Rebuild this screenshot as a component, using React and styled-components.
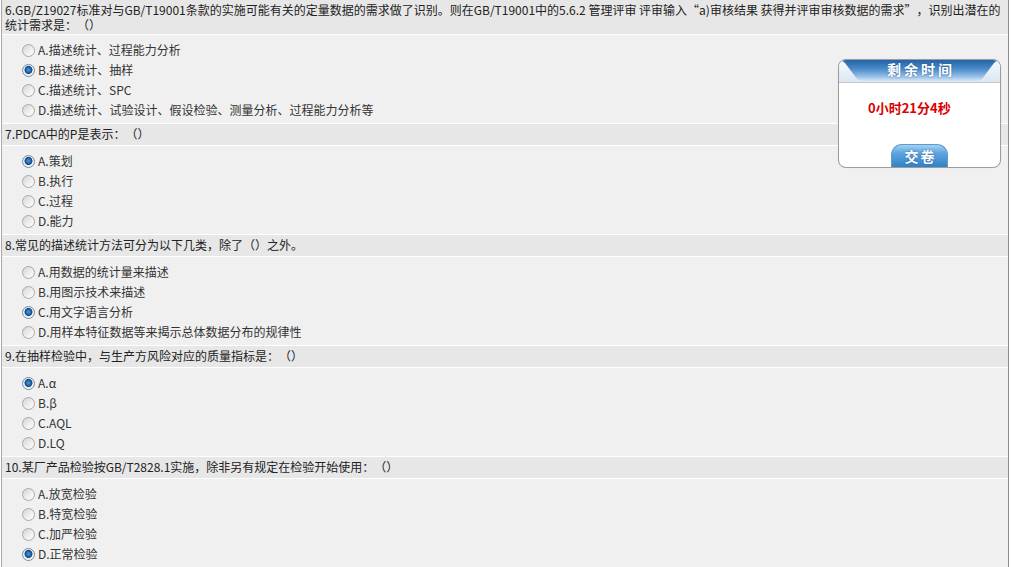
import React from 'react';
import styled, { createGlobalStyle } from 'styled-components';

const GlobalStyle = createGlobalStyle`
  html, body {
    margin: 0;
    padding: 0;
    background: #fff;
  }
  body {
    font-family: "Noto Sans CJK SC", "Noto Sans", sans-serif;
    font-size: 12px;
    text-spacing-trim: space-all;
  }
`;

const Page = styled.div`
  position: relative;
  margin-left: 1px;
  width: 1006px;
  height: 567px;
  overflow: hidden;
  border-left: 1px solid #a9a9a9;
  border-right: 1px solid #8e8e8e;
  background: #f0f0f0;
`;

const QuestionTitle = styled.div`
  padding: 2px 4px ${(p) => (p.$tall ? '2px' : '4px')} 3px;
  line-height: 15px;
  background: #e7e7e7;
  color: #222;
  border-top: ${(p) => (p.$first ? 'none' : '1px solid #fff')};
  border-bottom: 1px solid #fff;
  white-space: nowrap;
`;

const OptionList = styled.div`
  padding: 5px 0 3px 20px;
`;

const OptionRow = styled.label`
  display: flex;
  align-items: center;
  gap: 3px;
  height: 20px;
  color: #333;
  line-height: 20px;
`;

const Radio = styled.input.attrs({ type: 'radio' })`
  appearance: none;
  margin: 0;
  width: 13px;
  height: 13px;
  border-radius: 50%;
  border: 1px solid ${(p) => (p.checked ? '#6f8ba5' : '#a8a8a8')};
  background: ${(p) =>
    p.checked
      ? 'radial-gradient(circle at 50% 45%, #4f9be6 0, #1f62ab 2.6px, #17406e 3.6px, #dfe6ee 4.3px, #ffffff 6px)'
      : 'linear-gradient(135deg, #d4d4d4 0%, #ececec 50%, #ffffff 100%)'};
  box-sizing: border-box;
  flex: none;
`;

const TimerBox = styled.div`
  position: absolute;
  top: 59px;
  left: 836px;
  width: 161px;
  height: 107px;
  border: 1px solid #9c9c9c;
  border-radius: 8px;
  background: #fff;
  overflow: hidden;
  display: flex;
  flex-direction: column;
  align-items: center;
  box-shadow: 0 0 1px rgba(0, 0, 0, 0.15);
`;

const TimerHead = styled.div`
  align-self: stretch;
  height: 22px;
  border-bottom: 1px solid #c6c6c6;
  background: linear-gradient(#f7fafd, #dbe7f2);
`;

const Band = styled.div`
  height: 100%;
  box-sizing: border-box;
  display: flex;
  align-items: center;
  justify-content: center;
  padding: 0 0 4px 3px;
  color: #fff;
  font-size: 14px;
  font-weight: bold;
  letter-spacing: 3px;
  text-shadow: 0 0 2px rgba(20, 60, 110, 0.6);
  background: linear-gradient(180deg, #2463a6 0%, #4a8acb 40%, #8fbbe4 72%, #e3eef9 100%);
  clip-path: polygon(
    2px 0, 6px 3px, 9px 7px, 12px 11px, 15px 15px, 18px 19px, 23px 22px,
    138px 22px, 143px 19px, 146px 15px, 149px 11px, 152px 7px, 155px 3px, 159px 0
  );
`;

const TimeLeft = styled.div`
  align-self: stretch;
  margin-top: 17px;
  padding-left: 29px;
  color: #d90000;
  font-size: 13px;
  font-weight: bold;
  line-height: 16px;
`;

const SubmitButton = styled.button`
  margin-top: auto;
  width: 57px;
  height: 23px;
  padding: 0 0 0 2px;
  border: 1px solid #5d9bd0;
  border-bottom: none;
  border-radius: 11px 11px 0 0;
  background: linear-gradient(180deg, #a6d2f2 0%, #5fa6de 35%, #2f82c6 100%);
  color: #fff;
  font-family: "Noto Sans CJK SC", sans-serif;
  font-size: 14px;
  font-weight: bold;
  letter-spacing: 2px;
  text-shadow: 0 0 2px rgba(20, 60, 110, 0.5);
  cursor: pointer;
`;

const questions = [
  {
    lines: [
      '6.GB/Z19027标准对与GB/T19001条款的实施可能有关的定量数据的需求做了识别。则在GB/T19001中的5.6.2 管理评审 评审输入“a)审核结果 获得并评审审核数据的需求”，识别出潜在的',
      '统计需求是：（）',
    ],
    options: ['A.描述统计、过程能力分析', 'B.描述统计、抽样', 'C.描述统计、SPC', 'D.描述统计、试验设计、假设检验、测量分析、过程能力分析等'],
    answer: 1,
  },
  {
    lines: ['7.PDCA中的P是表示：（）'],
    options: ['A.策划', 'B.执行', 'C.过程', 'D.能力'],
    answer: 0,
  },
  {
    lines: ['8.常见的描述统计方法可分为以下几类，除了（）之外。'],
    options: ['A.用数据的统计量来描述', 'B.用图示技术来描述', 'C.用文字语言分析', 'D.用样本特征数据等来揭示总体数据分布的规律性'],
    answer: 2,
  },
  {
    lines: ['9.在抽样检验中，与生产方风险对应的质量指标是：（）'],
    options: ['A.α', 'B.β', 'C.AQL', 'D.LQ'],
    answer: 0,
  },
  {
    lines: ['10.某厂产品检验按GB/T2828.1实施，除非另有规定在检验开始使用：（）'],
    options: ['A.放宽检验', 'B.特宽检验', 'C.加严检验', 'D.正常检验'],
    answer: 3,
  },
];

const App = () => {
  return (
    <>
      <GlobalStyle />
      <Page>
        {questions.map((q, qi) => (
          <section key={qi}>
            <QuestionTitle $first={qi === 0} $tall={q.lines.length > 1}>
              {q.lines.map((line, li) => (
                <div key={li}>{line}</div>
              ))}
            </QuestionTitle>
            <OptionList>
              {q.options.map((opt, oi) => (
                <OptionRow key={oi}>
                  <Radio name={`q${qi}`} checked={oi === q.answer} readOnly />
                  <span>{opt}</span>
                </OptionRow>
              ))}
            </OptionList>
          </section>
        ))}
        <TimerBox>
          <TimerHead>
            <Band>剩余时间</Band>
          </TimerHead>
          <TimeLeft>0小时21分4秒</TimeLeft>
          <SubmitButton type="button">交卷</SubmitButton>
        </TimerBox>
      </Page>
    </>
  );
};

export default App;
